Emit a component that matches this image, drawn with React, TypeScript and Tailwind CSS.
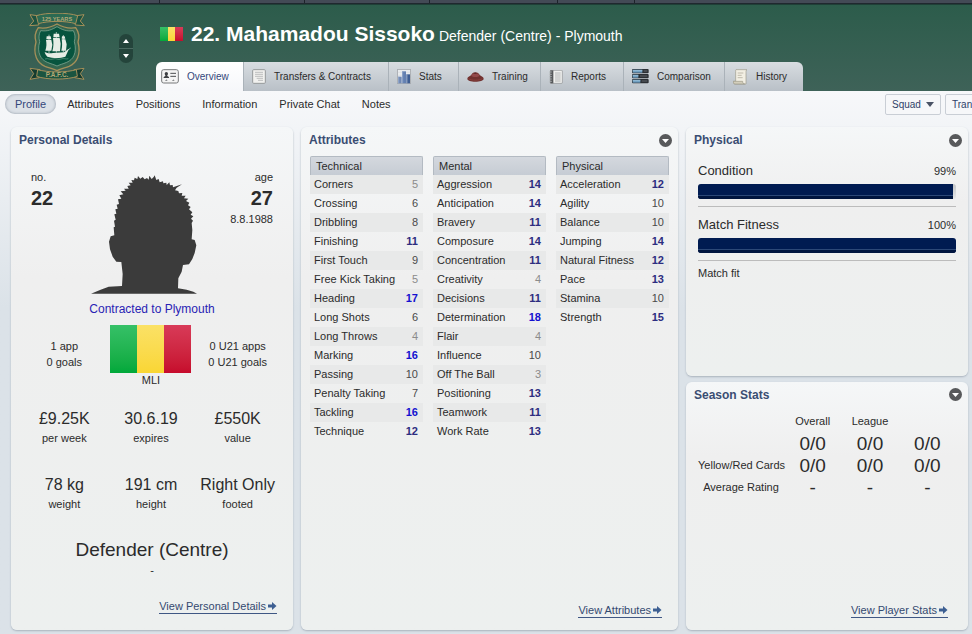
import type { ReactNode } from 'react';

type Attribute = [string, number];

const technical: Attribute[] = [
  ['Corners', 5], ['Crossing', 6], ['Dribbling', 8], ['Finishing', 11], ['First Touch', 9],
  ['Free Kick Taking', 5], ['Heading', 17], ['Long Shots', 6], ['Long Throws', 4], ['Marking', 16],
  ['Passing', 10], ['Penalty Taking', 7], ['Tackling', 16], ['Technique', 12],
];

const mental: Attribute[] = [
  ['Aggression', 14], ['Anticipation', 14], ['Bravery', 11], ['Composure', 14], ['Concentration', 11],
  ['Creativity', 4], ['Decisions', 11], ['Determination', 18], ['Flair', 4], ['Influence', 10],
  ['Off The Ball', 3], ['Positioning', 13], ['Teamwork', 11], ['Work Rate', 13],
];

const physical: Attribute[] = [
  ['Acceleration', 12], ['Agility', 10], ['Balance', 10], ['Jumping', 14],
  ['Natural Fitness', 12], ['Pace', 13], ['Stamina', 10], ['Strength', 15],
];

const facts = [
  { value: '£9.25K', label: 'per week' },
  { value: '30.6.19', label: 'expires' },
  { value: '£550K', label: 'value' },
  { value: '78 kg', label: 'weight' },
  { value: '191 cm', label: 'height' },
  { value: 'Right Only', label: 'footed' },
];

const seasonRows = [
  { label: '', values: ['0/0', '0/0', '0/0'] },
  { label: 'Yellow/Red Cards', values: ['0/0', '0/0', '0/0'] },
  { label: 'Average Rating', values: ['-', '-', '-'] },
];

function OverviewIcon() {
  return (
    <svg width="18" height="15" viewBox="0 0 54 45" aria-hidden="true">
      <rect x="2" y="2" width="50" height="40" rx="6" fill="#f4f4f4" stroke="#77797b" strokeWidth="3" />
      <circle cx="16" cy="14" r="5" fill="#3d3f42" />
      <path d="M13 17h6v4l5 3v3H8v-3l5-3z" fill="#3d3f42" />
      <path d="M28 13h17M28 22h17" stroke="#4c4e51" strokeWidth="3" />
      <path d="M12 36l4-5 4 5zM33 36l4-5 4 5z" fill="#8b8d90" />
    </svg>
  );
}

function DocumentIcon() {
  return (
    <svg width="14" height="15" viewBox="0 0 42 45" aria-hidden="true">
      <rect x="2" y="2" width="38" height="41" rx="3" fill="#f1f1ef" stroke="#96999b" strokeWidth="3" />
      <path d="M9 10h24M9 16h24M9 22h24M14 28h19M18 34h15" stroke="#a2a4a6" strokeWidth="2" />
    </svg>
  );
}

function StatsIcon() {
  return (
    <svg width="14" height="15" viewBox="0 0 42 45" aria-hidden="true">
      <rect x="1" y="1" width="40" height="43" rx="2" fill="#e9ecef" stroke="#85898e" strokeWidth="2" />
      <path d="M2 10h38M2 19h38M2 28h38" stroke="#c3c8cd" strokeWidth="1" />
      <rect x="3" y="23" width="11" height="20" fill="#7089b5" />
      <rect x="15" y="7" width="12" height="36" fill="#6380b1" />
      <rect x="28" y="16" width="11" height="27" fill="#3e5d92" />
      <path d="M5 23v20M17 7v36M30 16v27" stroke="#a6b8d6" strokeWidth="2" />
    </svg>
  );
}

function TrainingIcon() {
  return (
    <svg width="17" height="10" viewBox="0 0 51 30" aria-hidden="true">
      <path d="M1 20c0-5 7-7 11-10C16 5 18 1 25 1s10 4 14 9c4 3 11 5 11 10 0 6-12 9-25 9S1 26 1 20z" fill="#71312f" />
      <path d="M12 11c4-5 7-8 13-8s9 3 13 8c-5 5-20 6-26 0z" fill="#93494a" />
      <ellipse cx="25" cy="4" rx="5" ry="2" fill="#5f2a2a" />
      <path d="M4 20c10 6 32 6 42 0" stroke="#944744" strokeWidth="2" fill="none" />
    </svg>
  );
}

function ReportsIcon() {
  return (
    <svg width="14" height="14" viewBox="0 0 42 42" aria-hidden="true">
      <rect x="4" y="1" width="36" height="39" rx="2" fill="#f0f0ee" stroke="#8c8e8f" strokeWidth="2" />
      <rect x="4" y="1" width="9" height="39" fill="#56585a" />
      <path d="M0 6h9M0 13h9M0 20h9M0 27h9M0 34h9" stroke="#b9bbbd" strokeWidth="2" />
      <path d="M18 9h17M18 15h17M18 21h17M18 27h17M18 33h17" stroke="#999b9d" strokeWidth="2" />
    </svg>
  );
}

function ComparisonIcon() {
  return (
    <svg width="17" height="15" viewBox="0 0 51 45" aria-hidden="true">
      <rect x="0" y="0" width="50" height="13" rx="3" fill="#2c3034" />
      <rect x="0" y="15" width="50" height="13" rx="3" fill="#2c3034" />
      <rect x="0" y="30" width="50" height="13" rx="3" fill="#2c3034" />
      <rect x="2" y="2" width="29" height="9" fill="#6d9dc0" />
      <rect x="2" y="17" width="17" height="9" fill="#6d9dc0" />
      <rect x="2" y="32" width="23" height="9" fill="#6d9dc0" />
      <path d="M2 5h29M2 20h17M2 35h23" stroke="#a9cbe0" strokeWidth="2" />
      <path d="M35 6h11M24 21h22M29 36h17" stroke="#60656a" strokeWidth="3" />
    </svg>
  );
}

function HistoryIcon() {
  return (
    <svg width="15" height="16" viewBox="0 0 45 48" aria-hidden="true">
      <path d="M9 2h33c-3 2-3 5-3 8v35H5c-3 0-4-3-4-8h7V8c0-3-1-4 1-6z" fill="#f2efe3" stroke="#9c988a" strokeWidth="2" />
      <path d="M1 37h28c0 5 2 8 6 8H6c-4 0-5-4-5-8z" fill="#d3cebb" stroke="#9c988a" strokeWidth="2" />
      <path d="M14 12h17M14 19h12M14 26h15" stroke="#a7a292" strokeWidth="2" />
    </svg>
  );
}

const tabs = [
  { label: 'Overview', icon: OverviewIcon, width: 'w-[87px]' },
  { label: 'Transfers & Contracts', icon: DocumentIcon, width: 'w-[145px]' },
  { label: 'Stats', icon: StatsIcon, width: 'w-[70px]' },
  { label: 'Training', icon: TrainingIcon, width: 'w-[82px]' },
  { label: 'Reports', icon: ReportsIcon, width: 'w-[83px]' },
  { label: 'Comparison', icon: ComparisonIcon, width: 'w-[101px]' },
  { label: 'History', icon: HistoryIcon, width: 'w-[79px]' },
];

const pages = ['Profile', 'Attributes', 'Positions', 'Information', 'Private Chat', 'Notes'];

function Crest() {
  return (
    <svg width="56" height="68" viewBox="0 0 168 204" role="img" aria-label="Plymouth crest">
      <g stroke="#a5905a" strokeWidth="3">
        <path d="M3 5l30 4-4 27-27 2 12-14z" fill="#1d5341" />
        <path d="M165 5l-30 4 4 27 27 2-12-14z" fill="#1d5341" />
        <path d="M22 8c30-10 94-10 124 0l-6 24c-30-9-82-9-112 0z" fill="#2c6a52" />
        <path d="M28 44c22 4 40-2 56-11 16 9 34 15 56 11 10 14 12 28 7 43 10 38-4 64-27 73-14 5-26 7-36 13-10-6-22-8-36-13-23-9-37-35-27-73-5-15-3-29 7-43z" fill="#34664f" strokeWidth="4" />
        <path d="M3 166l30 4-2 24-28 5 11-17z" fill="#143c30" />
        <path d="M165 166l-30 4 2 24 28 5-11-17z" fill="#143c30" />
        <path d="M26 170c30 9 86 9 116 0l3 20c-30 11-92 11-122 0z" fill="#1b5440" />
      </g>
      <path d="M35 53c20 3 34-3 49-12 15 9 29 15 49 12 6 11 6 21 3 33 9 33-3 54-23 62-12 5-21 7-29 11-8-4-17-6-29-11-20-8-32-29-23-62-3-12-3-22 3-33z" fill="#07543e" stroke="#8fb5a0" strokeWidth="2" />
      <g fill="#e6ede5">
        <path d="M47 117c9 5 18 4 25 3l33-2 15-11-6 14-5 10c-16 6-38 5-54 0-4-4-7-9-8-14z" />
        <path d="M51 81h16l3 14-3 18H49c4-12 4-20 2-32zM53 70h12l2 9H52z" />
        <path d="M72 75h20l3 17-2 23H70c4-14 4-26 2-40zM74 62h16l2 11H73z" />
        <path d="M98 79h11l4 15-2 19H97c3-11 3-22 1-34zM99 70h8l2 7H98z" />
      </g>
      <path d="M60 65v55M82 57v62M103 66v52M114 113l11-8" stroke="#e6ede5" strokeWidth="2" />
      <path d="M48 138c9-4 15 4 24 0s15 4 24 0 15 2 22-1" stroke="#5fa087" strokeWidth="2" fill="none" />
      <text x="84" y="25" textAnchor="middle" fontSize="17" fontWeight="bold" fill="#b5a877" fontFamily="Liberation Sans, sans-serif">125 YEARS</text>
      <text x="84" y="192" textAnchor="middle" fontSize="19" fontWeight="bold" fill="#b5a877" fontFamily="Liberation Sans, sans-serif">P.A.F.C.</text>
    </svg>
  );
}

function Silhouette() {
  return (
    <svg width="106" height="120" viewBox="273 162 318 360" role="img" aria-label="Player" className="shrink-0">
      <path
        fill="#3b3b3b"
        d="M273 521L300 510 326 500 366 498 368 462 364 426 349 425 338 410 330 388 327 365 332 349 343 346 341 322 345 320 342 302 347 299 343 283 349 281 346 268 353 266 350 254 357 252 354 238 364 236 358 226 370 223 362 214 377 212 372 206 386 206 382 198 392 196 386 188 398 188 394 180 402 181 404 173 412 177 414 168 421 176 428 171 434 178 441 174 446 179 448 167 455 177 461 171 464 166 469 180 476 177 479 187 489 184 490 190 499 188 500 195 508 187 510 196 518 195 519 202 546 193 530 203 525 211 535 213 537 220 547 219 545 227 557 227 552 235 565 236 558 243 568 248 564 256 572 261 567 268 577 277 572 284 580 289 573 296 579 302 575 309 577 330 575 358 584 360 589 376 584 399 577 417 567 433 549 435 545 455 535 475 534 505 560 509 580 515 591 521Z"
      />
    </svg>
  );
}

function MaliFlag({ className }: { className: string }) {
  return (
    <div role="img" aria-label="Mali" className={`grid grid-cols-3 ${className}`}>
      <span className="bg-linear-to-b from-[#35c067] to-[#00a83a]" />
      <span className="bg-linear-to-b from-[#fbe165] to-[#f9d633]" />
      <span className="bg-linear-to-b from-[#d83a58] to-[#c60a2c]" />
    </div>
  );
}

function Panel({ title, menu, children, className = '' }: { title: string; menu?: boolean; children: ReactNode; className?: string }) {
  return (
    <section className={`flex flex-col rounded-md bg-linear-to-b from-[#f5f7f8] via-[#efefef] via-30% to-[#edf0ef] shadow-[0_1px_2px_#a9b2bc] ${className}`}>
      <header className="flex h-[26px] items-center justify-between pl-2 pr-[6px]">
        <h2 className="text-[12px] leading-4 font-bold text-[#3a4d72]">{title}</h2>
        {menu && (
          <button type="button" aria-label={`${title} menu`}>
            <svg width="13" height="13" viewBox="0 0 13 13" aria-hidden="true">
              <circle cx="6.5" cy="6.5" r="6.5" fill="#58595b" />
              <path d="M3 5h7L6.500 9z" fill="#fff" />
            </svg>
          </button>
        )}
      </header>
      {children}
    </section>
  );
}

function PanelLink({ label, className }: { label: string; className: string }) {
  return (
    <a href="#" className={`mt-auto flex items-center gap-[2px] self-end border-b border-[#3f5784] text-[11px] leading-[14px] whitespace-nowrap text-[#34496f] ${className}`}>
      {label}
      <svg width="9" height="8" viewBox="0 0 9 8" aria-hidden="true">
        <path d="M0 2.500h4V0l4.500 4L4 8V5.500H0z" fill="#3d5f92" />
      </svg>
    </a>
  );
}

function valueColor(value: number) {
  if (value >= 16) return 'font-bold text-[#1410d0]';
  if (value >= 11) return 'font-bold text-[#2d2d80]';
  if (value >= 6) return 'text-[#4a4a4a]';
  return 'text-[#8b8b8b]';
}

function AttributeTable({ title, rows }: { title: string; rows: Attribute[] }) {
  return (
    <table className="w-full border-separate border-spacing-0 self-start text-[11px] leading-[19px]">
      <thead>
        <tr>
          <th colSpan={2} className="h-[19px] rounded-t-xs border border-b-0 border-[#b3bac2] bg-linear-to-b from-[#d4d8de] to-[#c6ccd4] p-0 pl-[5px] text-left leading-[18px] font-normal">
            {title}
          </th>
        </tr>
      </thead>
      <tbody>
        {rows.map(([name, value]) => (
          <tr key={name} className="odd:bg-[#e8e9e9]">
            <td className="p-0 pl-1 whitespace-nowrap">{name}</td>
            <td className={`p-0 pr-[5px] text-right ${valueColor(value)}`}>{value}</td>
          </tr>
        ))}
      </tbody>
    </table>
  );
}

function Meter({ label, value }: { label: string; value: number }) {
  return (
    <div className="border-b border-[#bcbcbc] pb-[7px]">
      <div className="mb-[3px] flex items-center justify-between leading-5">
        <span className="text-[13px]">{label}</span>
        <span className="text-[11px]">{value}%</span>
      </div>
      <div role="progressbar" aria-label={label} aria-valuenow={value} className="h-[15px] overflow-hidden rounded-[3px] bg-linear-to-b from-[#c4c6c8] to-[#e6e7e8]">
        <div className="flex h-full flex-col justify-end bg-[#001b51]" style={{ width: `${value}%` }}>
          <div className="h-1 border-t border-[#2c4877] bg-[#00153f]" />
        </div>
      </div>
    </div>
  );
}

export default function App() {
  return (
    <div className="flex min-h-screen flex-col overflow-hidden bg-[#dde3e9] font-['Liberation_Sans',Arial,sans-serif] text-[#2b2b2b]">
      <div className="flex h-1 border-b border-[#20282f] bg-[#434a56]">
        <span className="w-40 border-r border-[#1d232b]" />
        <span className="w-[145px] border-r border-[#1d232b]" />
        <span className="w-[125px] border-r border-[#1d232b]" />
        <span className="w-[128px] border-r border-[#1d232b]" />
        <span className="w-[77px] border-r border-[#1d232b]" />
      </div>

      <header className="flex h-[87px] border-t border-[#1f3f37] bg-linear-to-b from-[#2c5c4b] to-[#3e6258]">
        <div className="flex w-[156px] shrink-0 items-start pl-[29px]">
          <div className="pt-2">
            <Crest />
          </div>
          <div className="mt-[29px] ml-[34px] flex w-[14px] flex-col overflow-hidden rounded-full bg-[#24443b]">
            <button type="button" aria-label="Previous player" className="flex h-[14px] items-center justify-center">
              <svg width="6" height="4" viewBox="0 0 6 4"><path d="M0 4l3-4 3 4z" fill="#fff" /></svg>
            </button>
            <button type="button" aria-label="Next player" className="flex h-[15px] items-center justify-center border-t border-[#4b6a61]">
              <svg width="6" height="4" viewBox="0 0 6 4"><path d="M0 0l3 4 3-4z" fill="#fff" /></svg>
            </button>
          </div>
        </div>

        <div className="flex flex-1 flex-col justify-between">
          <div className="flex items-center gap-2 pt-4 pl-1 text-white">
            <MaliFlag className="h-[14px] w-[23px]" />
            <div className="flex items-baseline gap-1">
              <h1 className="text-[21px] leading-[26px] font-bold">22. Mahamadou Sissoko</h1>
              <span className="text-[14px]">Defender (Centre) - Plymouth</span>
            </div>
          </div>
          <nav className="flex h-[29px] self-start overflow-hidden rounded-t-md">
            {tabs.map((tab, i) => (
              <button
                key={tab.label}
                type="button"
                className={`flex shrink-0 items-center gap-2 whitespace-nowrap text-[10px] ${tab.width} ${
                  i === 0
                    ? 'bg-linear-to-b from-white to-[#f6f7fa] pl-[5px] text-[#34477a]'
                    : 'border-l border-[#aab2b9] bg-linear-to-b from-[#d8dde1] to-[#b9c0c7] pl-2'
                }`}
              >
                <tab.icon />
                {tab.label}
              </button>
            ))}
          </nav>
        </div>
      </header>

      <div className="flex flex-1 flex-col bg-linear-to-b from-[#f7f8fa] to-[#dbe2e8] to-40%">
        <div className="flex h-9 items-start justify-between pt-[3px] pl-[5px]">
          <nav className="flex text-[11px] leading-5">
            {pages.map((page, i) => (
              <a
                key={page}
                href="#"
                className={i === 0
                  ? 'rounded-full bg-[#dce1e7] px-[10px] text-[#34477a] shadow-[inset_0_0_3px_#8f99a5]'
                  : 'px-[11px]'}
              >
                {page}
              </a>
            ))}
          </nav>
          <div className="flex w-[87px] shrink-0 gap-1 overflow-hidden text-[10px] text-[#2f4268]">
            <button type="button" className="flex h-[21px] w-14 shrink-0 items-center justify-between rounded-xs border border-[#c9ced5] bg-[#f6f7f9] px-[6px]">
              Squad
              <svg width="8" height="5" viewBox="0 0 8 5" aria-hidden="true"><path d="M0 0h8L4 5z" fill="#4a5365" /></svg>
            </button>
            <button type="button" className="h-[21px] shrink-0 rounded-xs border border-[#c9ced5] bg-[#f6f7f9] px-[6px]">Transfer</button>
          </div>
        </div>

        <main className="grid flex-1 grid-cols-[282fr_377fr_282fr] gap-2 pr-1 pb-1 pl-[11px]">
          <Panel title="Personal Details">
            <div className="mt-[17px] flex justify-between px-5 text-[11px] leading-[14px]">
              <div className="w-15">
                <p>no.</p>
                <p className="text-[20px] leading-7 font-bold">22</p>
              </div>
              <div className="pt-1">
                <Silhouette />
              </div>
              <div className="flex-1 text-right">
                <p>age</p>
                <p className="text-[20px] leading-7 font-bold">27</p>
                <p>8.8.1988</p>
              </div>
            </div>
            <a href="#" className="mt-[7px] self-center text-[12px] leading-4 text-[#2a22b4]">Contracted to Plymouth</a>

            <div className="mt-2 grid grid-cols-3 pr-3 pl-[10px] text-center text-[11px]">
              <div className="pt-[13px] leading-4">
                <p>1 app</p>
                <p>0 goals</p>
              </div>
              <div className="flex flex-col items-center leading-[14px]">
                <MaliFlag className="h-12 w-[81px]" />
                <p>MLI</p>
              </div>
              <div className="pt-[13px] leading-4">
                <p>0 U21 apps</p>
                <p>0 U21 goals</p>
              </div>
            </div>

            <dl className="mt-5 grid grid-cols-3 gap-y-7 pr-3 pl-[10px] text-center">
              {facts.map((fact) => (
                <div key={fact.label} className="flex flex-col-reverse">
                  <dt className="text-[11px] leading-[14px]">{fact.label}</dt>
                  <dd className="text-[16px] leading-6 whitespace-nowrap">{fact.value}</dd>
                </div>
              ))}
            </dl>

            <p className="mt-[27px] text-center text-[19px] leading-6">Defender (Centre)</p>
            <p className="text-center text-[11px] leading-4">-</p>
            <PanelLink label="View Personal Details" className="mr-4 mb-4" />
          </Panel>

          <Panel title="Attributes" menu>
            <div className="mt-[3px] grid grid-cols-3 gap-[10px] px-[9px]">
              <AttributeTable title="Technical" rows={technical} />
              <AttributeTable title="Mental" rows={mental} />
              <AttributeTable title="Physical" rows={physical} />
            </div>
            <PanelLink label="View Attributes" className="mr-4 mb-3" />
          </Panel>

          <div className="flex flex-col gap-[6px]">
            <Panel title="Physical" menu className="flex-1">
              <div className="mt-2 flex flex-col gap-2 px-3">
                <Meter label="Condition" value={99} />
                <Meter label="Match Fitness" value={100} />
              </div>
              <p className="mt-1 px-3 text-[11px] leading-4">Match fit</p>
            </Panel>

            <Panel title="Season Stats" menu className="flex-1">
              <div className="mt-[3px] px-3">
                <table className="w-full table-fixed text-center text-[11px]">
                  <thead>
                    <tr className="h-[22px]">
                      <td className="w-[86px] p-0" />
                      <th className="p-0 font-normal">Overall</th>
                      <th className="p-0 font-normal">League</th>
                      <td className="p-0" />
                    </tr>
                  </thead>
                  <tbody>
                    {seasonRows.map((row, i) => (
                      <tr key={i} className="h-[22px]">
                        <th className="p-0 font-normal whitespace-nowrap">{row.label}</th>
                        {row.values.map((value, j) => (
                          <td key={j} className="p-0 text-[19px] leading-[22px]">{value}</td>
                        ))}
                      </tr>
                    ))}
                  </tbody>
                </table>
              </div>
              <PanelLink label="View Player Stats" className="mr-5 mb-3" />
            </Panel>
          </div>
        </main>
      </div>
    </div>
  );
}
